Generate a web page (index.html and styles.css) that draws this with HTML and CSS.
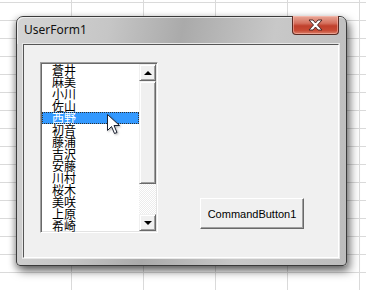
FILE: index.html
```html
<!DOCTYPE html>
<html lang="ja">
<head>
    <meta charset="UTF-8">
    <title>UserForm1</title>
    <link rel="stylesheet" href="styles.css">
</head>
<body>
    <div class="window">
        <div class="titlebar">
            <span class="title">UserForm1</span>
            <div class="close-btn">
                <svg width="15" height="12" viewBox="0 0 15 12">
                    <path d="M1 1h4l2.5 3 2.5-3h4L9.5 6 14 11h-4L7.5 8 5 11H1l4.5-5z" fill="#fff" stroke="#4a2a28" stroke-width="1"/>
                </svg>
            </div>
        </div>
        <div class="client">
            <div class="listbox">
                <ul class="items">
                    <li>蒼井</li>
                    <li>麻美</li>
                    <li>小川</li>
                    <li>佐山</li>
                    <li class="selected">西野</li>
                    <li>初音</li>
                    <li>藤浦</li>
                    <li>吉沢</li>
                    <li>安藤</li>
                    <li>川村</li>
                    <li>桜木</li>
                    <li>美咲</li>
                    <li>上原</li>
                    <li>希崎</li>
                </ul>
                <div class="scrollbar">
                    <div class="sb-btn"><span class="arrow-up"></span></div>
                    <div class="sb-thumb"></div>
                    <div class="sb-track"></div>
                    <div class="sb-btn"><span class="arrow-down"></span></div>
                </div>
            </div>
            <button class="cmd-btn">CommandButton1</button>
        </div>
    </div>

    <!-- curseur de la souris -->
    <svg class="cursor" width="14" height="21" viewBox="0 0 14 21">
        <path d="M0.5 0.5v16l4-4 3 7 2.5-1-3-7h5.5z" fill="#fff" stroke="#1a2030" stroke-width="1" stroke-linejoin="round"/>
    </svg>
</body>
</html>
```

FILE: styles.css
```css
body {
    margin: 0;
    width: 366px;
    height: 290px;
    overflow: hidden;
    position: relative;
    font-family: "Noto Sans", "DejaVu Sans", sans-serif;
    background-color: #fff;
    background-image:
        linear-gradient(to right, #dadada 1px, transparent 1px),
        linear-gradient(to bottom, #dadada 1px, transparent 1px);
    background-size: 72px 18px;
    background-position: -1px 2px;
}
.window {
    position: absolute;
    left: 16px;
    top: 16px;
    width: 331px;
    height: 250px;
    box-sizing: border-box;
    border: 1px solid #3a3a3a;
    border-radius: 7px 7px 4px 4px;
    background: linear-gradient(100deg, #d4d4d4 0%, #c6c6c6 25%, #aaaaaa 45%, #c8c8c8 70%, #bcbcbc 100%);
    box-shadow: 3px 5px 10px rgba(0, 0, 0, 0.55), -2px 2px 6px rgba(0, 0, 0, 0.25);
    display: flex;
    flex-direction: column;
}
.titlebar {
    height: 27px;
    position: relative;
    display: flex;
    align-items: center;
    padding-left: 7px;
    border-radius: 6px 6px 0 0;
    box-shadow: inset 1px 1px 0 rgba(255, 255, 255, 0.6);
}
.title {
    font-size: 12px;
    color: #111;
    margin-top: -2px;
}
.close-btn {
    position: absolute;
    right: 7px;
    top: -1px;
    width: 47px;
    height: 19px;
    box-sizing: border-box;
    border: 1px solid #5a2a22;
    border-top: none;
    border-radius: 0 0 4px 4px;
    background: linear-gradient(to bottom, #e8a898 0%, #d5705e 40%, #c0402c 55%, #c84a34 80%, #d8806a 100%);
    box-shadow: inset 0 0 0 1px rgba(255, 200, 190, 0.5);
    display: flex;
    align-items: center;
    justify-content: center;
}
.client {
    margin: 0 7px 0 6px;
    height: 214px;
    box-sizing: border-box;
    border: 1px solid #555;
    border-right-color: #fff;
    border-bottom-color: #fff;
    box-shadow: 0 0 0 1px #e8e8e8;
    background-color: #f0f0f0;
    display: flex;
    align-items: flex-start;
    padding: 17px 0 0 16px;
}
.listbox {
    width: 118px;
    height: 171px;
    box-sizing: border-box;
    display: flex;
    background-color: #fff;
    border: 1px solid;
    border-color: #a0a0a0 #fff #fff #a0a0a0;
    box-shadow: inset 1px 1px 0 #696969, inset -1px -1px 0 #e3e3e3;
    padding: 1px;
}
.items {
    list-style: none;
    margin: 0;
    padding: 0;
    flex: 1;
    font-family: "Noto Sans CJK JP", sans-serif;
    font-size: 12px;
    color: #000;
}
.items li {
    height: 12px;
    line-height: 12px;
    padding-left: 10px;
}
.items li.selected {
    background-color: #3399ff;
    color: #fff;
    outline: 1px dotted #303030;
    outline-offset: -1px;
}
.scrollbar {
    width: 17px;
    display: flex;
    flex-direction: column;
}
.sb-btn,
.sb-thumb {
    box-sizing: border-box;
    background-color: #f0f0f0;
    border: 1px solid;
    border-color: #f0f0f0 #696969 #696969 #f0f0f0;
    box-shadow: inset 1px 1px 0 #fff, inset -1px -1px 0 #a0a0a0;
}
.sb-btn {
    height: 17px;
    display: flex;
    align-items: center;
    justify-content: center;
}
.sb-thumb {
    height: 103px;
}
.sb-track {
    flex: 1;
    background: repeating-conic-gradient(#fff 0 25%, #ececec 0 50%) 0 0 / 2px 2px;
}
.arrow-up {
    width: 0;
    height: 0;
    border-left: 4px solid transparent;
    border-right: 4px solid transparent;
    border-bottom: 4px solid #000;
}
.arrow-down {
    width: 0;
    height: 0;
    border-left: 4px solid transparent;
    border-right: 4px solid transparent;
    border-top: 4px solid #000;
}
.cmd-btn {
    margin: 136px 0 0 42px;
    width: 104px;
    height: 31px;
    padding: 0;
    font-family: "Liberation Sans", Arial, sans-serif;
    font-size: 11px;
    color: #000;
    background-color: #f0f0f0;
    border: 1px solid;
    border-color: #fff #696969 #696969 #fff;
    box-shadow: inset -1px -1px 0 #a0a0a0;
}
.cursor {
    position: absolute;
    left: 107px;
    top: 114px;
    filter: drop-shadow(1px 1px 1px rgba(0, 0, 0, 0.3));
}
```
